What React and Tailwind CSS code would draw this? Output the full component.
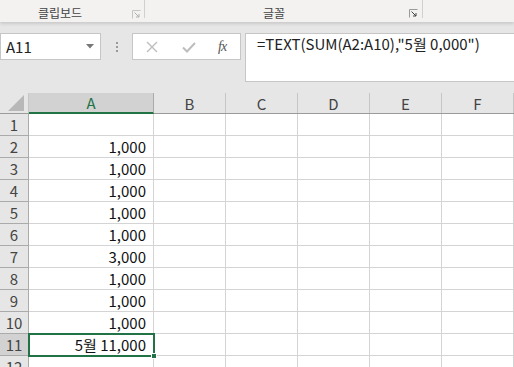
import React from "react";

const COLS = [
  { key: "A", w: "w-[125px]" },
  { key: "B", w: "w-[72px]" },
  { key: "C", w: "w-[72px]" },
  { key: "D", w: "w-[72px]" },
  { key: "E", w: "w-[72px]" },
  { key: "F", w: "w-[72px]" },
];

const VALUES = ["", "1,000", "1,000", "1,000", "1,000", "1,000", "3,000", "1,000", "1,000", "1,000", "5월 11,000", ""];

function Launcher({ dark }) {
  return (
    <svg width="9" height="9" viewBox="0 0 9 9" className="shrink-0">
      <path d="M0.5 8.5V0.5H8.5" fill="none" stroke={dark ? "#9a9a9a" : "#c4c4c4"} />
      <path d="M2.5 2.5L7 7M7 4V7H4" fill="none" stroke={dark ? "#444" : "#b0b0b0"} />
    </svg>
  );
}

function Ribbon() {
  return (
    <div className="h-[22px] bg-[#f3f2f1] flex text-[12px] text-[#444] shadow-[0_2px_3px_rgba(0,0,0,0.12)] relative z-10">
      <div className="w-[144px] flex items-center relative">
        <span className="absolute left-[38px] top-[7px]">클립보드</span>
        <div className="ml-auto mr-[3px] mt-[6px]">
          <Launcher />
        </div>
      </div>
      <div className="w-px h-[18px] bg-[#d2d0ce]" />
      <div className="w-[277px] flex items-center relative">
        <span className="absolute left-[118px] top-[7px]">글꼴</span>
        <div className="ml-auto mr-[4px] mt-[5px]">
          <Launcher dark />
        </div>
      </div>
      <div className="w-px h-[18px] bg-[#d2d0ce]" />
    </div>
  );
}

function FormulaBar() {
  return (
    <div className="flex items-start pt-[11px] h-[71px]">
      <div className="w-[101px] h-[27px] bg-white border border-[#c6c6c6] flex items-center pl-[5px] pr-[6px] text-[15px] text-[#222]">
        <span>A11</span>
        <svg width="8" height="5" viewBox="0 0 8 5" className="ml-auto">
          <path d="M0 0H8L4 4.5Z" fill="#777" />
        </svg>
      </div>
      <div className="w-[31px] h-[27px] flex flex-col items-center justify-center gap-[2px]">
        <span className="w-[2px] h-[2px] bg-[#9a9a9a]" />
        <span className="w-[2px] h-[2px] bg-[#9a9a9a]" />
        <span className="w-[2px] h-[2px] bg-[#9a9a9a]" />
      </div>
      <div className="w-[109px] h-[27px] bg-white border border-[#c6c6c6] flex items-center">
        <svg width="12" height="12" viewBox="0 0 12 12" className="ml-[13px]">
          <path d="M1 1L11 11M11 1L1 11" stroke="#bdbdbd" strokeWidth="1.4" />
        </svg>
        <svg width="14" height="12" viewBox="0 0 14 12" className="ml-[24px]">
          <path d="M1 6.5L5 10.5L13 2" fill="none" stroke="#bdbdbd" strokeWidth="2" />
        </svg>
        <span className="ml-[22px] text-[14px] italic text-[#555] font-['Liberation_Serif',serif] tracking-[-1px]">fx</span>
      </div>
      <div className="w-[4px]" />
      <div className="flex-1 h-[49px] bg-white border border-[#c6c6c6] border-r-0 pl-[11px] pt-[2px] text-[15px] text-[#222]">
        =TEXT(SUM(A2:A10),"5월 0,000")
      </div>
    </div>
  );
}

function Grid() {
  return (
    <div className="relative">
      <div className="flex h-[21px] bg-[#e6e6e6] border-b border-[#9b9b9b]">
        <div className="w-[29px] border-r border-[#c6c6c6] relative">
          <svg width="16" height="16" viewBox="0 0 16 16" className="absolute right-[4px] bottom-[2px]">
            <path d="M16 0V16H0Z" fill="#b8b8b8" />
          </svg>
        </div>
        {COLS.map((c) =>
          c.key === "A" ? (
            <div key={c.key} className={`${c.w} -mb-px border-r border-[#ababab] bg-[#d2d2d2] border-b-2 border-b-[#217346] flex items-center justify-center text-[#217346]`}>
              {c.key}
            </div>
          ) : (
            <div key={c.key} className={`${c.w} border-r border-[#c6c6c6] flex items-center justify-center text-[#444]`}>
              {c.key}
            </div>
          )
        )}
      </div>
      {VALUES.map((v, i) => {
        const sel = i === 10;
        return (
          <div key={i} className="flex h-[22px] bg-white">
            <div className={`w-[29px] border-r border-b border-[#ababab] flex items-center justify-center ${sel ? "bg-[#d2d2d2] text-[#444]" : "bg-[#e6e6e6] text-[#444]"}`}>
              {i + 1}
            </div>
            {COLS.map((c) => (
              <div key={c.key} className={`${c.w} border-r border-b border-[#d4d4d4] flex items-center justify-end pr-[7px] text-[#111]`}>
                {c.key === "A" ? v : ""}
              </div>
            ))}
          </div>
        );
      })}
      <div className="absolute left-[28px] top-[240px] w-[127px] h-[24px] border-2 border-[#217346] pointer-events-none" />
      <div className="absolute left-[151px] top-[260px] w-[6px] h-[6px] bg-[#217346] border border-white" />
    </div>
  );
}

export default function App() {
  return (
    <div className="w-[514px] h-[367px] overflow-hidden bg-[#e6e6e6] font-['Noto_Sans_CJK_KR','Noto_Sans',sans-serif] text-[15px] leading-none">
      <Ribbon />
      <FormulaBar />
      <Grid />
    </div>
  );
}
